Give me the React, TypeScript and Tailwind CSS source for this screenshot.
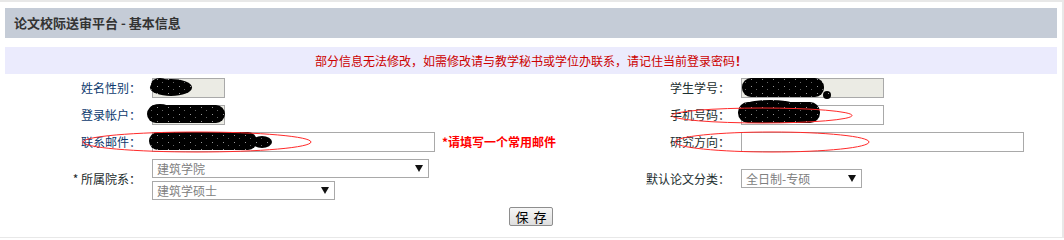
const cjk = "font-['Noto_Sans_CJK_SC','Noto_Sans',sans-serif]"

function Arrow() {
  return (
    <svg width="8" height="7" viewBox="0 0 8 7" className="shrink-0">
      <path d="M0 0h8L4 7z" fill="#111" />
    </svg>
  )
}

function Select({ value, w }: { value: string; w: string }) {
  return (
    <div className={`${w} h-[19px] border border-[#a9a9a9] bg-white flex items-center justify-between pl-[4px] pr-[5px] text-[12px] text-[#808080]`}>
      <span>{value}</span>
      <Arrow />
    </div>
  )
}

function Label({ text, color = 'text-[#0d3a6e]' }: { text: string; color?: string }) {
  return <div className={`flex items-center justify-end pr-[11px] text-[12px] ${color}`}>{text}</div>
}

function Box({ w, disabled }: { w: string; disabled?: boolean }) {
  return <div className={`${w} h-[20px] border border-[#a9a9a9] ${disabled ? 'bg-[#ebebe4]' : 'bg-white'}`} />
}

export default function App() {
  return (
    <div className={`relative w-[1064px] h-[238px] bg-[#e8e8e8] pt-[2px] ${cjk}`}>
      <div className="w-[1062px] h-[235px] bg-white px-[5px] pt-[6px]">
        {/* title bar */}
        <div className="h-[30px] bg-[#c5ccd7] flex items-center pl-[9px] text-[13px] font-bold text-[#333]">
          论文校际送审平台 - 基本信息
        </div>

        {/* notice */}
        <div className="mt-[9px] h-[27px] bg-[#ebebfd] flex items-center justify-center text-[12px] text-[#cc0000]">
          部分信息无法修改，如需修改请与教学秘书或学位办联系，请记住当前登录密码<span className="font-bold">！</span>
        </div>

        {/* form */}
        <div className="grid grid-cols-[147px_436px_153px_1fr] auto-rows-[27px]">
          <Label text="姓名性别：" />
          <div className="flex items-center"><Box w="w-[73px]" disabled /></div>
          <Label text="学生学号：" color="text-[#1c2f30]" />
          <div className="flex items-center"><Box w="w-[143px]" disabled /></div>

          <Label text="登录帐户：" />
          <div className="flex items-center"><Box w="w-[73px]" disabled /></div>
          <Label text="手机号码：" color="text-[#1c2f30]" />
          <div className="flex items-center"><Box w="w-[143px]" /></div>

          <Label text="联系邮件：" />
          <div className="flex items-center">
            <Box w="w-[283px]" />
            <span className="ml-[7px] text-[12px] font-bold text-[#ff0000]">*请填写一个常用邮件</span>
          </div>
          <Label text="研究方向：" color="text-[#1c2f30]" />
          <div className="flex items-center"><Box w="w-[283px]" /></div>

          <div className="h-[47px] flex items-center justify-end pr-[11px] text-[12px] text-[#1a2a2a]">* 所属院系：</div>
          <div className="h-[47px] flex flex-col gap-[3px] pt-[4px]">
            <Select value="建筑学院" w="w-[277px]" />
            <Select value="建筑学硕士" w="w-[183px]" />
          </div>
          <div className="h-[47px] flex items-center justify-end pr-[11px] text-[12px] text-[#1c2f30]">默认论文分类：</div>
          <div className="h-[47px] flex items-center">
            <Select value="全日制-专硕" w="w-[121px]" />
          </div>
        </div>

        <div className="mt-[25px] flex justify-center">
          <button className="w-[44px] h-[19px] border border-[#8e8e8e] rounded-[2px] bg-gradient-to-b from-[#f6f6f6] to-[#dedede] text-[13px] leading-none text-black flex items-center justify-center gap-[5px]">
            <span>保</span>
            <span>存</span>
          </button>
        </div>
      </div>

      {/* redaction marks and red annotations drawn over the form */}
      <svg className="absolute inset-0 pointer-events-none" width="1064" height="238">
        <defs>
          <pattern id="sp" width="11" height="7" patternUnits="userSpaceOnUse">
            <rect width="11" height="7" fill="#000" />
            <rect x="3" y="2" width="1" height="1" fill="#999" />
            <rect x="8" y="5" width="1" height="1" fill="#666" />
          </pattern>
        </defs>
        <g fill="url(#sp)">
          <ellipse cx="171" cy="87.5" rx="21" ry="8.5" />
          <ellipse cx="160" cy="84" rx="9" ry="6" />
          <rect x="147" y="105" width="78" height="18" rx="9" />
          <ellipse cx="160" cy="108" rx="10" ry="4" />
          <rect x="149" y="132" width="108" height="18" rx="9" />
          <ellipse cx="262" cy="142" rx="10" ry="6" />
          <rect x="742" y="78" width="82" height="19" rx="9" />
          <circle cx="827" cy="95" r="4" />
          <rect x="738" y="102" width="82" height="21" rx="10" />
          <ellipse cx="770" cy="103" rx="22" ry="3" />
        </g>
        <g fill="none" stroke="#ff2a2a" strokeWidth="1">
          <ellipse cx="197" cy="142" rx="114" ry="10" />
          <ellipse cx="762" cy="115.5" rx="90" ry="7.5" />
          <ellipse cx="772" cy="142" rx="97" ry="10" />
        </g>
      </svg>
    </div>
  )
}
